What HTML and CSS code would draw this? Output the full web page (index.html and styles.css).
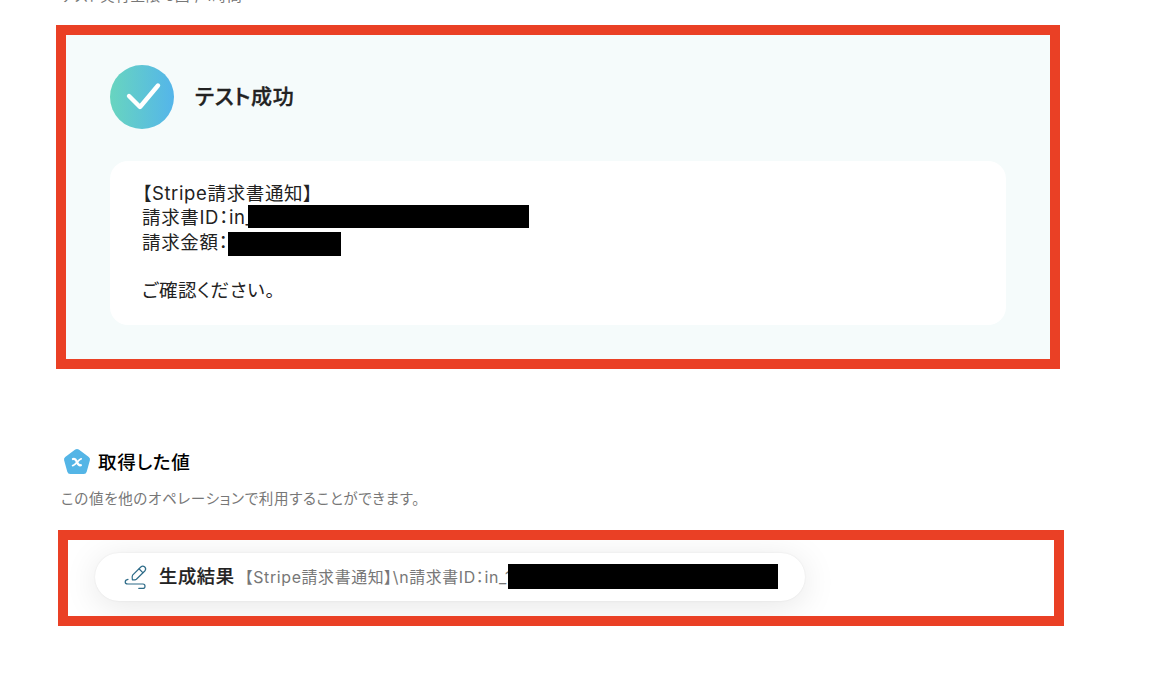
FILE: index.html
```html
<!DOCTYPE html>
<html lang="ja">
<head>
    <meta charset="utf-8">
    <meta name="viewport" content="width=device-width, initial-scale=1">
    <title>テスト成功</title>
    <link rel="stylesheet" href="styles.css">
</head>
<body>
    <p class="limit">テスト実行上限 5回 / 1時間</p>

    <section class="frame result">
        <div class="result-header">
            <svg class="check" viewBox="0 0 64 64">
                <defs>
                    <linearGradient id="checkFill" x1="0" y1="0" x2="1" y2="0">
                        <stop offset="0" stop-color="#68d5bf"/>
                        <stop offset="1" stop-color="#54b5ea"/>
                    </linearGradient>
                </defs>
                <circle cx="32" cy="32" r="32" fill="url(#checkFill)"/>
                <path d="M19 31 L30 42 L48 20.5" fill="none" stroke="#fff" stroke-width="4.4" stroke-linecap="round" stroke-linejoin="round"/>
            </svg>
            <h1>テスト成功</h1>
        </div>
        <div class="message">
            <p>【Stripe請求書通知】</p>
            <p>請求書ID：in_<span class="mask mask-id"></span></p>
            <p>請求金額：<span class="mask mask-price"></span></p>
            <p>&nbsp;</p>
            <p>ご確認ください。</p>
        </div>
    </section>

    <section class="values">
        <div class="values-title">
            <svg class="pentagon" viewBox="0 0 28 28">
                <path d="M14 4 L24 11.4 L20.8 23 L7.2 23 L4 11.4 Z" fill="#54b5e6" stroke="#54b5e6" stroke-width="6" stroke-linejoin="round"/>
                <path d="M10 11 C12.6 10 13 12 14 14.2 S15.5 17.8 17.8 17.2" fill="none" stroke="#fff" stroke-width="2.3" stroke-linecap="round"/>
                <path d="M18.2 10.8 C16 10.8 12 17.6 9.6 17.6" fill="none" stroke="#fff" stroke-width="1.7" stroke-linecap="round"/>
            </svg>
            <h2>取得した値</h2>
        </div>
        <p class="note">この値を他のオペレーションで利用することができます。</p>
    </section>

    <section class="frame output">
        <div class="pill">
            <svg class="pen" viewBox="0 0 24 26">
                <g fill="none" stroke="#2d6b88" stroke-width="1.2" stroke-linecap="round" stroke-linejoin="round">
                    <path d="M8.6 11.2 L16.8 3 Q18.8 1.2 20.8 3 Q22.6 5 20.8 7 L12.4 15.2 Q11.4 16 8.4 15.9 Q7.8 12.2 8.6 11.2 Z"/>
                    <path d="M15.2 5 L18.8 8.6"/>
                    <path d="M4 15.3 Q1.2 15.8 1.2 18 Q1.2 20 3.8 20 H19 Q21 20 21 22.2 Q21 24.4 19 24.4 H14.8"/>
                </g>
            </svg>
            <span class="pill-name">生成結果</span>
            <span class="pill-value">【Stripe請求書通知】\n請求書ID：in_1</span>
            <span class="mask mask-value"></span>
        </div>
    </section>
</body>
</html>
```
FILE: styles.css
```css
*{
    margin: 0;
    padding: 0;
    box-sizing: border-box;
}
body{
    height: 691px;
    overflow: hidden;
    background: #fff;
    color: #222;
    font-family: Inter, "Noto Sans CJK JP", sans-serif;
    font-feature-settings: "palt";
    letter-spacing: 0.04em;
}
.limit{
    height: 25px;
    padding-left: 61px;
    margin-top: -14px;
    margin-bottom: 14px;
    font-size: 14.5px;
    line-height: 20px;
    color: #777;
}
.frame{
    border: 10px solid #ea4025;
}
.result{
    width: 1004px;
    height: 344px;
    margin-left: 56px;
    padding: 30px 44px;
    background: #f5fbfb;
}
.result-header{
    display: flex;
    align-items: center;
    gap: 21px;
}
.check{
    width: 64px;
    height: 64px;
}
h1{
    font-size: 21px;
    line-height: 30px;
    font-weight: 500;
    -webkit-text-stroke: 0.35px #222;
}
.message{
    height: 164px;
    margin-top: 32px;
    padding: 20px 32px;
    border-radius: 18px;
    background: #fff;
    font-size: 18.5px;
    line-height: 24.3px;
}
.message p{
    position: relative;
    height: 24.3px;
}
/* black bars hiding the private values */
.mask{
    position: absolute;
    background: #000;
}
.mask-id{
    left: 106px;
    top: 0;
    width: 281px;
    height: 23px;
}
.mask-price{
    left: 86px;
    top: 2px;
    width: 113px;
    height: 24px;
}
.values{
    height: 161px;
    padding: 79px 0 0 61px;
}
.values-title{
    display: flex;
    align-items: center;
    gap: 7px;
    margin-left: 2px;
}
.pentagon{
    width: 28px;
    height: 28px;
}
h2{
    font-size: 18.6px;
    line-height: 28px;
    font-weight: 500;
    color: #000;
}
.note{
    margin-top: 13px;
    font-size: 14.55px;
    line-height: 20px;
    color: #777;
}
.output{
    width: 1006px;
    height: 96px;
    margin-left: 58px;
    padding: 13px 27px;
    overflow: hidden;
}
.pill{
    position: relative;
    display: flex;
    align-items: center;
    width: 710px;
    height: 48px;
    padding-left: 29px;
    border-radius: 24px;
    background: #fff;
    box-shadow: 0 0 2px rgba(0, 0, 0, 0.08), 0 5px 34px rgba(0, 0, 0, 0.1);
    white-space: nowrap;
}
.pen{
    width: 24px;
    height: 26px;
    margin-right: 11px;
}
.pill-name{
    margin-right: 10px;
    padding-bottom: 4px;
    font-size: 18.3px;
    font-weight: 500;
    -webkit-text-stroke: 0.2px #222;
}
.pill-value{
    padding-bottom: 2px;
    font-size: 15.9px;
    color: #777;
}
.mask-value{
    left: 413px;
    top: 11px;
    width: 270px;
    height: 25px;
}
```
